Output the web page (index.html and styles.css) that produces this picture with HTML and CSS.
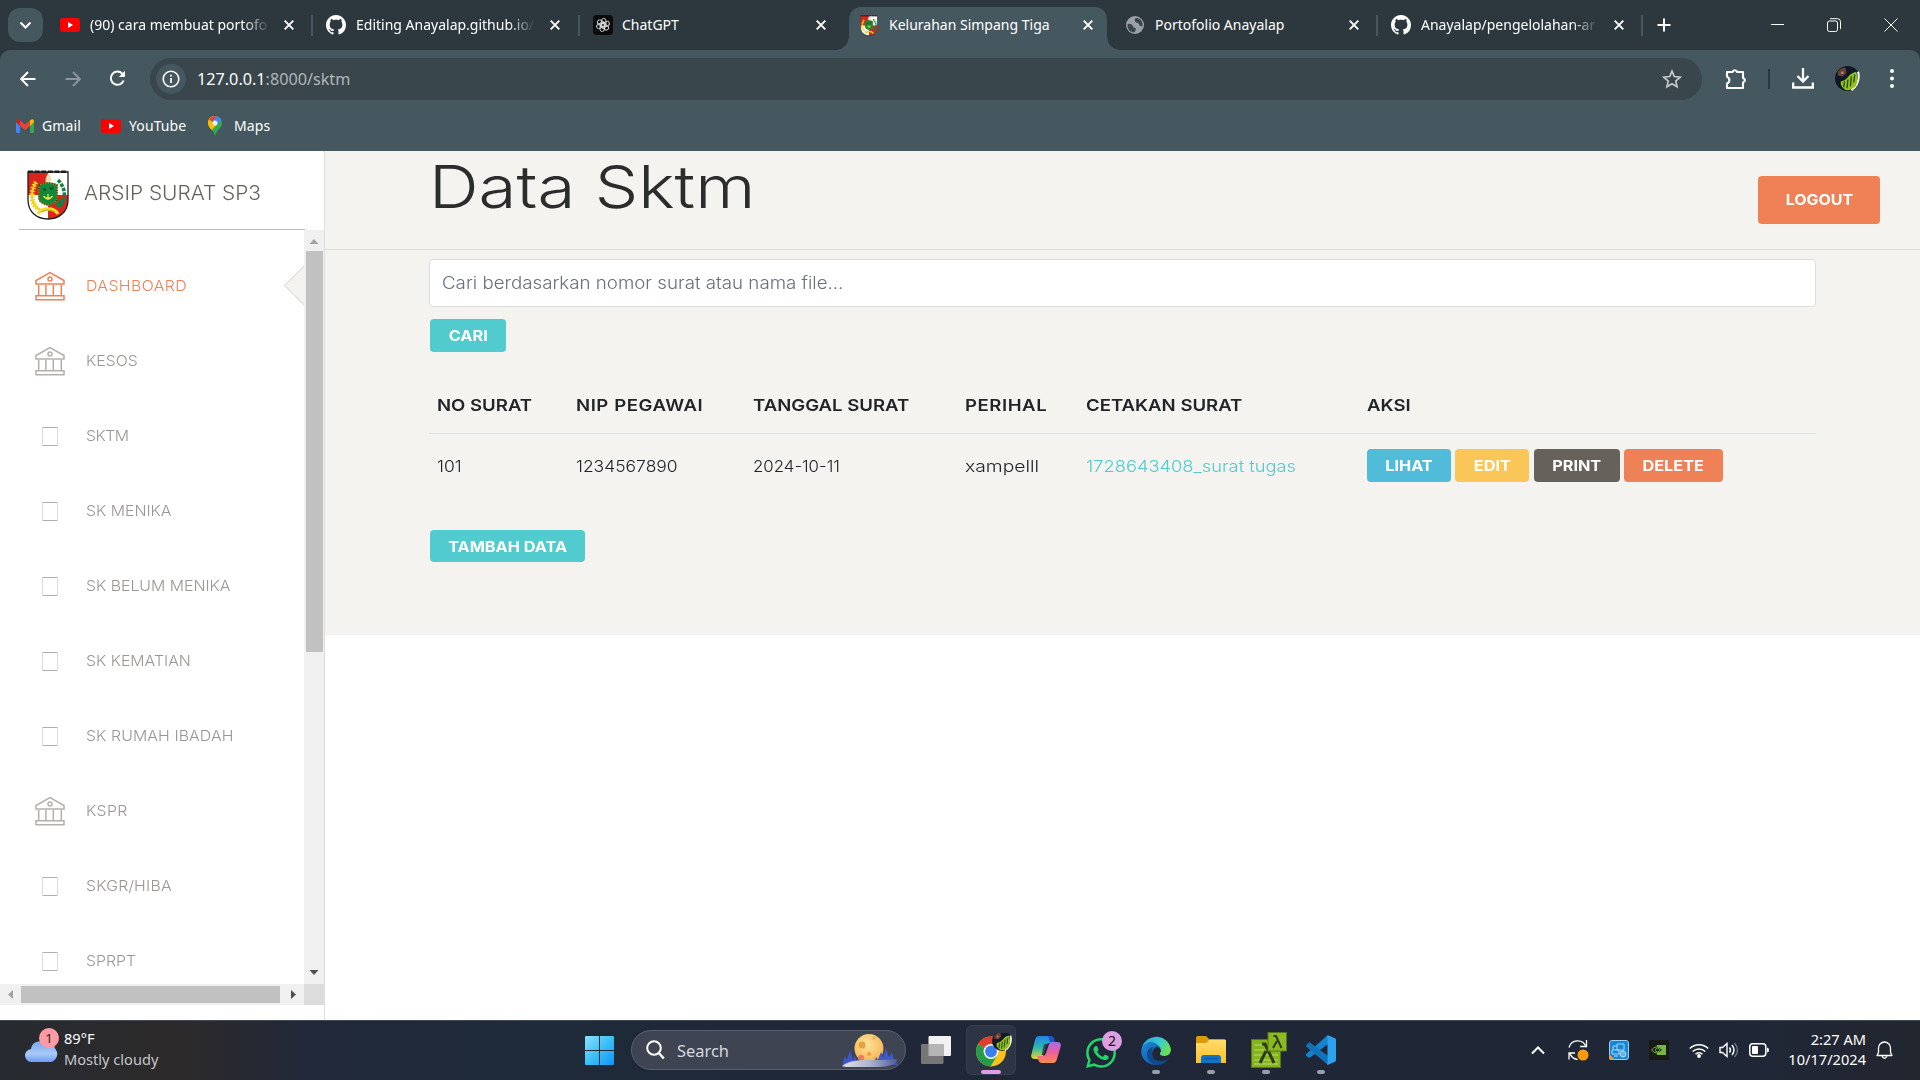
FILE: index.html
```html
<!DOCTYPE html>
<html lang="id">
<head>
<meta charset="utf-8">
<title>Kelurahan Simpang Tiga</title>
<link rel="stylesheet" href="styles.css">
</head>
<body>
<svg class="defs" width="0" height="0" aria-hidden="true">
  <defs>
    <linearGradient id="win" x1="0" y1="0" x2="1" y2="1"><stop offset="0" stop-color="#8be0fb"/><stop offset=".5" stop-color="#3cc0f8"/><stop offset="1" stop-color="#0f93f5"/></linearGradient>
    <linearGradient id="cloud" x1="0" y1="0" x2="0" y2="1"><stop offset="0" stop-color="#7ba8f0"/><stop offset=".6" stop-color="#a9c9f8"/><stop offset="1" stop-color="#6d9cf0"/></linearGradient>
    <radialGradient id="moon" cx=".45" cy=".35" r=".7"><stop offset="0" stop-color="#ffe39a"/><stop offset=".7" stop-color="#f7c064"/><stop offset="1" stop-color="#ea9a55"/></radialGradient>
    <linearGradient id="snow" x1="0" x2="1"><stop offset="0" stop-color="#dfe0e6"/><stop offset=".5" stop-color="#aeb3cc"/><stop offset="1" stop-color="#4b589c"/></linearGradient>
    <linearGradient id="copA" x1="0" y1="0" x2="0" y2="1"><stop offset="0" stop-color="#1f86e8"/><stop offset=".5" stop-color="#2fb7b0"/><stop offset="1" stop-color="#e8d52c"/></linearGradient>
    <linearGradient id="copB" x1="0" y1="0" x2="0" y2="1"><stop offset="0" stop-color="#a56bf0"/><stop offset=".5" stop-color="#ee5f9d"/><stop offset="1" stop-color="#fb8a4a"/></linearGradient>
    <linearGradient id="edgeA" x1="0" y1="0" x2="1" y2=".4"><stop offset="0" stop-color="#2a9fe0"/><stop offset=".6" stop-color="#35c9d2"/><stop offset="1" stop-color="#66e05a"/></linearGradient>
    <linearGradient id="edgeB" x1="0" y1="0" x2="1" y2="1"><stop offset="0" stop-color="#1b8ad8"/><stop offset="1" stop-color="#0d4f9e"/></linearGradient>
    <linearGradient id="folder" x1="0" y1="0" x2="0" y2="1"><stop offset="0" stop-color="#ffdc6a"/><stop offset="1" stop-color="#fdc02c"/></linearGradient>
    <symbol id="crest" viewBox="0 0 42 50">
      <path d="M1 2h40v28c0 12-9 19-20 19S1 42 1 30z" fill="#fff"/>
      <path d="M1 2h20v23H1z" fill="#dc241c"/>
      <path d="M21 25h20v5c0 12-9 19-20 19z" fill="#dc241c"/>
      <path d="M9 12C4 20 3 32 10 38q4 3 8 3" fill="none" stroke="#efd321" stroke-width="2.200"/>
      <path d="M9 12C4 20 3 32 10 38" fill="none" stroke="#efd321" stroke-width="5" stroke-dasharray="1.500 1.500"/>
      <path d="M31 10c6 6 8 14 5 22" fill="none" stroke="#128043" stroke-width="3.600" stroke-dasharray="3.500 1.200"/>
      <path d="M29 34l3-4h4l1 4-3 3h-4z" fill="#128043"/>
      <path d="M21 4c3 3 3 7 0 9s-3-5 0-9" fill="#e9e4c4" stroke="#cfc060" stroke-width=".7"/>
      <path d="M12 15q9-4 18 0v13q0 5-9 7-9-2-9-7z" fill="#0f8a3c" stroke="#8d8c1f" stroke-width="1.400"/>
      <path d="M12 15q9-4 18 0v13q0 5-9 7-9-2-9-7z" fill="none" stroke="#123f1c" stroke-width="1.400" stroke-dasharray="1 1.600"/>
      <path d="M21 24v6M16.500 26q4.500 6 9 0M18 28h6" fill="none" stroke="#f0e23c" stroke-width="1.300"/>
      <circle cx="17.500" cy="19.500" r="1.600" fill="#07552a"/><circle cx="24.500" cy="18.500" r="1.800" fill="#07552a"/>
      <path d="M11 44q3-5 10-5t10 5" fill="none" stroke="#f2de28" stroke-width="3.400"/>
      <path d="M14 42q7-4 14 0" fill="none" stroke="#b59a12" stroke-width=".8"/>
      <path d="M1 2h40v28c0 12-9 19-20 19S1 42 1 30z" fill="none" stroke="#1c1c1c" stroke-width="1.300"/>
      <path d="M1 1.800h40" stroke="#1c1c1c" stroke-width="2.600" stroke-dasharray="5 1.600"/>
    </symbol>
    <symbol id="bank" viewBox="0 0 30 30">
      <g fill="none" stroke="currentColor" stroke-width="1.500"><path d="M1 13V9.500L15 1.500l14 8V13z"/><circle cx="15" cy="8" r="2"/><path d="M3.700 14v10M10.900 14v10M18.300 14v10M26.300 14v10M1 24.800h28v4H1z"/></g>
    </symbol>
    <symbol id="glyph" viewBox="0 0 16 20"><path d="M.5 .5h15M.5 18.500h15" stroke="#b3afac" fill="none"/><path d="M.5 1v18M15.500 1v18" stroke="#dcdad8" fill="none"/></symbol>
    <symbol id="x" viewBox="0 0 12 12"><path d="M1.700 1.700l8.600 8.600M10.300 1.700l-8.600 8.600" stroke="#fff" stroke-width="1.900"/></symbol>
    <symbol id="yt" viewBox="0 0 20 14"><rect width="20" height="14" rx="3.200" fill="#f00"/><path d="M8 4l5 3-5 3z" fill="#fff"/></symbol>
    <symbol id="gh" viewBox="0 0 16 16"><path fill="#fff" d="M8 0C3.580 0 0 3.580 0 8c0 3.540 2.290 6.530 5.470 7.590.4.070.55-.17.55-.38 0-.19-.01-.82-.01-1.490-2.010.37-2.530-.49-2.690-.94-.09-.23-.48-.94-.82-1.130-.28-.15-.68-.52-.01-.53.63-.01 1.080.58 1.230.82.72 1.210 1.870.87 2.330.66.07-.52.28-.87.51-1.070-1.780-.2-3.640-.89-3.640-3.950 0-.87.31-1.590.82-2.150-.08-.2-.36-1.020.08-2.120 0 0 .67-.21 2.200.82.64-.18 1.320-.27 2-.27s1.360.09 2 .27c1.530-1.040 2.200-.82 2.200-.82.44 1.100.16 1.920.08 2.120.51.56.82 1.270.82 2.150 0 3.070-1.870 3.750-3.650 3.950.29.25.54.73.54 1.480 0 1.070-.01 1.930-.01 2.200 0 .21.15.46.55.38A8.010 8.010 0 0 0 16 8c0-4.420-3.580-8-8-8z"/></symbol>
    <symbol id="avatar" viewBox="0 0 26 26">
      <circle cx="13" cy="13" r="13" fill="#0e1826"/><path d="M3 6q4-5 8-4l1 5-4 4-5-1z" fill="#6b3f36"/><circle cx="7.500" cy="7" r="1.300" fill="#b98a80"/>
      <path d="M24 6q3 12-7 19" stroke="#fff" stroke-width="2.200" fill="none"/>
      <path d="M6 16q5-1 8-5t8-5q3 8 0 14-5 6-11 5-6-4-5-9z" fill="#8fc21c"/><path d="M10 16l-1 6M13.500 14l-1 9M17 11l-1 10M20.500 9l-1 8" stroke="#263f12" stroke-width="1.300"/>
    </symbol>
  </defs>
</svg>

<header class="browser">
  <div class="tabs">
    <div class="tab-search"><svg width="13" height="9" viewBox="0 0 13 9"><path d="M1.500 1.500l5 5 5-5" fill="none" stroke="#fff" stroke-width="2"/></svg></div>
    <div class="tab t1"><svg width="20" height="14"><use href="#yt"/></svg><span class="tab-title fade"><b>(90) cara membuat portofo</b></span><svg width="12" height="12"><use href="#x"/></svg></div>
    <div class="tab t2"><svg width="20" height="20"><use href="#gh"/></svg><span class="tab-title fade"><b>Editing Anayalap.github.io/</b></span><svg width="12" height="12"><use href="#x"/></svg></div>
    <div class="tab t3"><svg width="20" height="20" viewBox="0 0 20 20"><rect width="20" height="20" rx="4" fill="#0b0b0b"/><g fill="none" stroke="#dcdcdc" stroke-width=".9"><rect id="o" x="8.500" y="3.500" width="4.500" height="8.500" rx="2.200"/><use href="#o" transform="rotate(60 10 10)"/><use href="#o" transform="rotate(120 10 10)"/><use href="#o" transform="rotate(180 10 10)"/><use href="#o" transform="rotate(240 10 10)"/><use href="#o" transform="rotate(300 10 10)"/></g></svg><span class="tab-title"><b>ChatGPT</b></span><svg width="12" height="12"><use href="#x"/></svg></div>
    <div class="tab active"><svg width="20" height="21"><use href="#crest"/></svg><span class="tab-title"><b>Kelurahan Simpang Tiga</b></span><svg width="12" height="12"><use href="#x"/></svg></div>
    <div class="tab t5"><svg width="18" height="18" viewBox="0 0 18 18"><circle cx="9" cy="9" r="9" fill="#9aa0a6"/><path d="M1.500 8q4-1 5 1.500t3 2.500q1 3-2 4.500Q1 15 1.500 8zM9 2.500Q8 6 10.500 6.500t3 2.500 3 1Q17 3 11 2z" fill="#3a464d"/></svg><span class="tab-title"><b>Portofolio Anayalap</b></span><svg width="12" height="12"><use href="#x"/></svg></div>
    <div class="tab t6"><svg width="20" height="20"><use href="#gh"/></svg><span class="tab-title fade"><b>Anayalap/pengelolahan-ar</b></span><svg width="12" height="12"><use href="#x"/></svg></div>
    <svg class="new-tab" width="14" height="14" viewBox="0 0 14 14"><path d="M7 .5v13M.5 7h13" stroke="#fff" stroke-width="2"/></svg>
    <div class="window-controls">
      <svg width="13" height="14" viewBox="0 0 13 14"><path d="M0 6.500h13" stroke="#fff"/></svg>
      <svg width="14" height="14" viewBox="0 0 14 14"><g fill="none" stroke="#fff"><rect x=".5" y="3" width="10" height="10.500" rx="2"/><path d="M3 .7h7.500a3 3 0 0 1 3 3v7.500"/></g></svg>
      <svg width="14" height="14" viewBox="0 0 14 14"><path d="M.5 .5l13 13M13.500 .5l-13 13" stroke="#fff"/></svg>
    </div>
  </div>
  <div class="toolbar">
    <nav class="nav-buttons">
      <svg width="16" height="16" viewBox="0 0 16 16"><path d="M15.500 8H1.500M8 1L1.200 8 8 15" fill="none" stroke="#fff" stroke-width="1.900"/></svg>
      <svg width="16" height="16" viewBox="0 0 16 16"><path d="M.5 8h14M8 1l6.800 7L8 15" fill="none" stroke="#8b979c" stroke-width="1.900"/></svg>
      <svg width="17" height="17" viewBox="0 0 17 17"><path d="M14.600 10.500A6.600 6.600 0 1 1 13.300 3.700L15 5.500" fill="none" stroke="#fff" stroke-width="2"/><path d="M16 .8v6.200H9.800z" fill="#fff"/></svg>
    </nav>
    <div class="omnibox">
      <span class="site-info"><svg width="18" height="18" viewBox="0 0 18 18"><circle cx="9" cy="9" r="7.800" fill="none" stroke="#fff" stroke-width="1.600"/><path d="M9 8v5M9 4.800v1.700" stroke="#fff" stroke-width="1.700"/></svg></span>
      <span class="url"><b>127.0.0.1<i>:8000/sktm</i></b></span>
      <svg width="20" height="20" viewBox="0 0 24 24"><path d="M12 2.500l2.800 6.600 7.100.6-5.400 4.700 1.600 7-6.100-3.700-6.100 3.700 1.600-7-5.400-4.700 7.100-.6z" fill="none" stroke="#c5cacc" stroke-width="2"/></svg>
    </div>
    <div class="tools">
      <svg width="22" height="22" viewBox="0 0 22 22"><path d="M2 4h5.500a2.300 2.300 0 0 1 4.500 0h6v6a2.300 2.300 0 0 1 0 4.500V20H2v-4.500a3.600 3.600 0 0 0 0-6.800z" fill="none" stroke="#fff" stroke-width="2.100" stroke-linejoin="round"/></svg>
      <i class="divider"></i>
      <svg width="22" height="21" viewBox="0 0 22 21"><path d="M11 0v13M5.500 8l5.500 5.500L16.500 8M1.200 14.500v5h19.600v-5" fill="none" stroke="#fff" stroke-width="2.300"/></svg>
      <svg width="25" height="25"><use href="#avatar"/></svg>
      <svg width="4" height="19" viewBox="0 0 4 19"><g fill="#fff"><circle cx="2" cy="2" r="2"/><circle cx="2" cy="9.500" r="2"/><circle cx="2" cy="17" r="2"/></g></svg>
    </div>
  </div>
  <div class="bookmarks">
    <span class="bm bm1"><svg width="18" height="14" viewBox="0 0 18 14"><path d="M0 3h4v11H1.300A1.300 1.300 0 0 1 0 12.700z" fill="#4285f4"/><path d="M14 3h4v9.700a1.300 1.300 0 0 1-1.300 1.300H14z" fill="#34a853"/><path d="M14 1.500Q18-1.500 18 3L14 7z" fill="#fbbc04"/><path d="M4 1.500Q0-1.500 0 3l4 4z" fill="#c5221f"/><path d="M4 1.500l5 4 5-4V7l-5 4-5-4z" fill="#ea4335"/></svg><b>Gmail</b></span>
    <span class="bm bm2"><svg width="20" height="14"><use href="#yt"/></svg><b>YouTube</b></span>
    <span class="bm bm3"><svg width="14" height="20" viewBox="0 0 14 20"><path d="M7 0a7 7 0 0 1 7 7c0 5-5 6-7 13C5.500 13 0 12 0 7a7 7 0 0 1 7-7z" fill="#34a853"/><path d="M0 7Q0 0 7 0l6 3.500L4 14Q0 11 0 7z" fill="#fbbc04"/><path d="M1 3.500L4.500 6 9 1 7 0Q3 0 1 3.500z" fill="#ea4335"/><path d="M7 0q5 0 6.500 4L8 9 4.500 5.500 8.500 .2z" fill="#4285f4"/><circle cx="7" cy="7" r="2.500" fill="#e8f0fe"/></svg><b>Maps</b></span>
  </div>
</header>

<div class="page">
  <aside class="sidebar">
    <div class="brand"><svg width="42" height="50"><use href="#crest"/></svg><b>ARSIP SURAT SP3</b></div>
    <div class="scroller">
      <ul class="menu">
        <li class="current"><svg width="30" height="30"><use href="#bank"/></svg><b>DASHBOARD</b></li>
        <li><svg width="30" height="30"><use href="#bank"/></svg><b>KESOS</b></li>
        <li><svg class="small" width="16" height="20"><use href="#glyph"/></svg><b>SKTM</b></li>
        <li><svg class="small" width="16" height="20"><use href="#glyph"/></svg><b>SK MENIKA</b></li>
        <li><svg class="small" width="16" height="20"><use href="#glyph"/></svg><b>SK BELUM MENIKA</b></li>
        <li><svg class="small" width="16" height="20"><use href="#glyph"/></svg><b>SK KEMATIAN</b></li>
        <li><svg class="small" width="16" height="20"><use href="#glyph"/></svg><b>SK RUMAH IBADAH</b></li>
        <li><svg width="30" height="30"><use href="#bank"/></svg><b>KSPR</b></li>
        <li><svg class="small" width="16" height="20"><use href="#glyph"/></svg><b>SKGR/HIBA</b></li>
        <li><svg class="small" width="16" height="20"><use href="#glyph"/></svg><b>SPRPT</b></li>
      </ul>
      <div class="vbar">
        <svg width="20" height="21" viewBox="0 0 20 21"><path d="M5.500 14h9L10 9z" fill="#a3a3a3"/></svg>
        <i class="vthumb"></i>
        <svg width="20" height="21" viewBox="0 0 20 21"><path d="M5.500 7h9L10 12z" fill="#505050"/></svg>
      </div>
      <div class="hbar">
        <svg width="21" height="21" viewBox="0 0 21 21"><path d="M13 6v9l-5-4.500z" fill="#a3a3a3"/></svg>
        <i class="hthumb"></i>
        <svg width="24" height="21" viewBox="0 0 24 21"><path d="M11 6v9l5-4.500z" fill="#505050"/></svg>
      </div>
      <i class="corner"></i>
    </div>
  </aside>

  <main class="main">
    <div class="titlebar">
      <h1><b>Data Sktm</b></h1>
      <a class="btn logout"><b>LOGOUT</b></a>
    </div>
    <section class="content">
      <div class="search"><b>Cari berdasarkan nomor surat atau nama file...</b></div>
      <a class="btn teal cari"><b>CARI</b></a>
      <table>
        <colgroup><col class="c1"><col class="c2"><col class="c3"><col class="c4"><col class="c5"><col></colgroup>
        <thead><tr><th><b>NO SURAT</b></th><th><b class="loose">NIP PEGAWAI</b></th><th><b>TANGGAL SURAT</b></th><th><b class="loose">PERIHAL</b></th><th><b>CETAKAN SURAT</b></th><th><b>AKSI</b></th></tr></thead>
        <tbody><tr><td><b>101</b></td><td><b>1234567890</b></td><td><b class="date">2024-10-11</b></td><td><b class="subject">xampelll</b></td><td class="link"><b class="file">1728643408_surat tugas</b></td>
          <td class="last"><div class="actions"><a class="btn blue lihat"><b>LIHAT</b></a><a class="btn yellow edit"><b>EDIT</b></a><a class="btn dark print"><b>PRINT</b></a><a class="btn orange delete"><b>DELETE</b></a></div></td></tr></tbody>
      </table>
      <a class="btn teal tambah"><b>TAMBAH DATA</b></a>
    </section>
  </main>
</div>

<footer class="taskbar">
  <div class="weather">
    <svg width="36" height="40" viewBox="0 0 36 40"><circle cx="22" cy="18" r="8" fill="#f58220"/><path d="M7 34a6.500 6.500 0 0 1-1-13 8.500 8.500 0 0 1 16-3 7 7 0 0 1 4 16z" fill="url(#cloud)"/><circle cx="24" cy="10" r="10" fill="#ff99a4"/><text x="24" y="15" text-anchor="middle" font-size="13" fill="#222">1</text></svg>
    <div><b>89°F</b><br><b class="dim">Mostly cloudy</b></div>
  </div>
  <div class="dock">
    <svg width="29" height="29" viewBox="0 0 29 29"><path d="M0 1a1 1 0 0 1 1-1h13v14H0zM15 0h13a1 1 0 0 1 1 1v13H15zM0 15h14v14H1a1 1 0 0 1-1-1zM15 15h14v13a1 1 0 0 1-1 1H15z" fill="url(#win)"/></svg>
    <div class="find">
      <svg width="19" height="20" viewBox="0 0 19 20"><circle cx="8" cy="8" r="6.800" fill="none" stroke="#fff" stroke-width="2"/><path d="M12.800 13l5 5.500" stroke="#fff" stroke-width="2.400"/></svg>
      <b>Search</b>
      <svg width="56" height="36" viewBox="0 0 56 36"><circle cx="27" cy="16.500" r="14.500" fill="url(#moon)"/><circle cx="20" cy="13" r="3.500" fill="#e5a23c"/><circle cx="27" cy="22" r="2" fill="#ee9c4e"/><circle cx="32" cy="6" r="1.800" fill="#edb255"/><circle cx="19" cy="26" r="3" fill="#e97a5a"/><path d="M0 33l3-9 2 4 3-10 3 10 2-4 3 8zM32 32l2-7 2 3 3-8 2 5 3-9 3 9 3-5 2 8 4 5z" fill="#3d56c8"/><path d="M0 34q8-7 27-6 20 0 29-1-4 8-18 8H8q-6 0-8-1z" fill="url(#snow)"/></svg>
    </div>
    <svg class="views" width="30" height="28" viewBox="0 0 30 28"><rect x="7.500" width="22.500" height="20" rx="1" fill="#f2f2f2"/><rect y="8" width="22.500" height="20" rx="1" fill="#777"/><path d="M7.500 8h15v12h-15z" fill="#b4b4b4"/></svg>
    <div class="app on">
      <svg width="42" height="34" viewBox="0 0 42 34"><circle cx="16" cy="18.500" r="15" fill="#fbc116"/><path d="M16 18.500L3 11A15 15 0 0 1 29 11z" fill="#e33b2e"/><path d="M16 18.500L3 11a15 15 0 0 0 12.500 22.500L22.500 22z" fill="#269b4a"/><path d="M16 11.500h13" stroke="#e33b2e"/><circle cx="16" cy="18.500" r="7.500" fill="#fff"/><circle cx="16" cy="18.500" r="5.900" fill="#3b7ded"/><use href="#avatar" x="17" y="-2" width="20" height="20"/></svg>
      <i class="wide"></i>
    </div>
    <div class="app"><svg width="30" height="28" viewBox="0 0 30 28"><path d="M8 0h11q3 0 4 4l1 3h-6q-2 0-3 3l-3 10q-1 3-4 3H4q-5 0-3.500-5L4 4Q5 0 8 0z" fill="url(#copA)"/><path d="M22 27H11q-3 0-4-4l-.5-3H12q2 0 3-3l3-9q1-2 4-2h4q5 0 3.500 5L26 23q-1 4-4 4z" fill="url(#copB)"/><path d="M13 8h4.500l-3.500 11h-3.500z" fill="#232c3c" opacity=".75"/><path d="M17 0h3q3 0 4 6h-5z" fill="#1c56c9"/></svg></div>
    <div class="app"><svg width="36" height="38" viewBox="0 0 36 38"><g transform="translate(0 7) scale(1.880)"><path fill="#25d366" d="M13.601 2.326A7.854 7.854 0 0 0 7.994 0C3.627 0 .068 3.558.064 7.926c0 1.399.366 2.760 1.057 3.965L0 16l4.204-1.102a7.933 7.933 0 0 0 3.790.965h.004c4.368 0 7.926-3.558 7.930-7.930A7.898 7.898 0 0 0 13.600 2.326zM7.994 14.521a6.573 6.573 0 0 1-3.356-.92l-.24-.144-2.494.654.666-2.433-.156-.251a6.560 6.560 0 0 1-1.007-3.505c0-3.626 2.957-6.584 6.591-6.584a6.560 6.560 0 0 1 4.660 1.931 6.557 6.557 0 0 1 1.928 4.660c-.004 3.639-2.961 6.592-6.592 6.592zm3.615-4.934c-.197-.099-1.170-.578-1.353-.646-.182-.065-.315-.099-.445.099-.133.197-.513.646-.627.775-.114.133-.232.148-.43.050-.197-.1-.836-.308-1.592-.985-.59-.525-.985-1.175-1.103-1.372-.114-.198-.011-.304.088-.403.087-.088.197-.232.296-.346.1-.114.133-.198.198-.33.065-.134.034-.248-.015-.347-.05-.099-.445-1.076-.612-1.470-.16-.389-.323-.335-.445-.34-.114-.007-.247-.007-.38-.007a.729.729 0 0 0-.529.247c-.182.198-.691.677-.691 1.654 0 .977.710 1.916.81 2.049.098.133 1.394 2.132 3.383 2.992.47.205.84.326 1.129.418.475.152.904.129 1.246.080.38-.058 1.171-.48 1.338-.943.164-.464.164-.86.114-.943-.049-.084-.182-.133-.38-.232z"/></g><circle cx="26" cy="10" r="10" fill="#dd9fe3"/><text x="26" y="15" text-anchor="middle" font-size="14" fill="#111">2</text></svg></div>
    <div class="app"><svg width="30" height="30" viewBox="0 0 30 30"><path d="M1 12A15 15 0 0 1 30 14q0 6-6 7-6 0-5-3 2-2 0-5-8-7-18-1z" fill="url(#edgeA)"/><path d="M19 12Q10 2 1 12q-3 10 6 16 8 4 15 0-10 0-11-8 0-6 4-8 3-1 5 2z" fill="url(#edgeB)"/><path d="M11 16q-1 10 9 10 5 0 8-3-4 7-12 7Q6 28 6 18q1-6 7-6-2 1-2 4z" fill="#114a8b"/></svg><i></i></div>
    <div class="app"><svg width="30" height="28" viewBox="0 0 30 28"><path d="M0 2a2 2 0 0 1 2-2h8l3 3h15a2 2 0 0 1 2 2v5H0z" fill="#dc9a08"/><path d="M0 7h10l3-3h17v23H0z" fill="url(#folder)"/><path d="M5 27v-5a3 3 0 0 1 3-3h14a3 3 0 0 1 3 3v5z" fill="#0f74c9"/><path d="M8.500 22.800h13" stroke="#074f93"/></svg><i></i></div>
    <div class="app"><svg width="36" height="36" viewBox="0 0 36 36"><rect x=".5" y="7.500" width="29" height="28" fill="#84b51b" stroke="#59741c"/><path d="M3 13h13M3 18h24M3 23h24M3 28h24M3 32h24" stroke="#b9d67c"/><path d="M11 12h3l9 19M15 19L9 31" fill="none" stroke="#2e3b12" stroke-width="3"/><rect x="17" y=".5" width="18.500" height="18.500" fill="#8aba20" stroke="#59741c"/><path d="M22.500 4h2.500l5.500 12M26 9l-4 7" fill="none" stroke="#2e3b12" stroke-width="2"/></svg><i></i></div>
    <div class="app"><svg width="30" height="30" viewBox="0 0 30 30"><path d="M22 0v9L4 22.500l-1.500.2L0 20.500v-1.500z" fill="#1583cf"/><path d="M0 10.500L2.500 7.500 4 7.600 22 21v9L0 11.500z" fill="#1072b8"/><path d="M21.500 0L29 3.300a1.500 1.500 0 0 1 1 1.400v20.600a1.500 1.500 0 0 1-1 1.400L21.500 30z" fill="#2ba3f0"/></svg><i></i></div>
  </div>
  <div class="tray">
    <svg width="14" height="10" viewBox="0 0 14 10"><path d="M1 8.500l6-6 6 6" fill="none" stroke="#fff" stroke-width="2"/></svg>
    <svg class="sync" width="21" height="21" viewBox="0 0 21 21"><path d="M1 7.500a9 9 0 0 1 17-1M18.500 0v6.500H12M2 13.500q1.500 5 7.500 6M1 19.500v-6.500h6" fill="none" stroke="#fff" stroke-width="1.300"/><circle cx="15" cy="15" r="5.500" fill="#ff9a0c"/></svg>
    <svg class="wide-gap" width="20" height="20" viewBox="0 0 20 20"><rect x=".5" y=".5" width="19" height="19" rx="2.500" fill="#1686d6" stroke="#9fd0f0"/><path d="M4 10V6h4M8 4h7v6H8zM3 10h7v4H3zM5 16h4" fill="none" stroke="#a9d8f5"/><circle cx="14" cy="14" r="3" fill="#62b5ea" stroke="#b9dff7"/><path d="M0 14v4q0 2 2 2h4z" fill="#e8a040"/></svg>
    <svg class="wide-gap" width="20" height="20" viewBox="0 0 20 20"><path fill="#181a18" d="M0 0h20v20H0z"/><path d="M8 5h9v10H8z" fill="#76b83f"/><path d="M2.500 10q5-6.500 11 0-6 6-11 0z" fill="#181a18" stroke="#76b83f"/><circle cx="8.500" cy="10" r="2" fill="none" stroke="#76b83f"/></svg>
    <svg class="wide-gap" width="20" height="15" viewBox="0 0 20 15"><g fill="none" stroke="#fff" stroke-width="1.500"><path d="M.8 5.500a13 13 0 0 1 18.400 0M3.700 8.500a9 9 0 0 1 12.600 0M6.500 11.300a5 5 0 0 1 7 0"/></g><circle cx="10" cy="13" r="1.900" fill="#fff"/></svg>
    <svg class="gap" width="20" height="16" viewBox="0 0 20 16"><g fill="none" stroke="#fff" stroke-width="1.400"><path d="M1 5.500h2.500L8 1.500v13l-4.500-4H1z"/><path d="M10.500 5.500q2 2.500 0 5M13 3q4 5 0 10"/><path d="M15.500 1q6 7 0 14" stroke="#6b7280"/></g></svg>
    <svg class="gap" width="20" height="14" viewBox="0 0 20 14"><rect x=".8" y=".8" width="16" height="12.400" rx="3" fill="none" stroke="#fff" stroke-width="1.500"/><rect x="3" y="3" width="6" height="8" rx="1" fill="#fff"/><path d="M18 4.500q2 0 2 2.500t-2 2.500z" fill="#fff"/></svg>
    <div class="clock"><b>2:27 AM</b><br><b>10/17/2024</b></div>
    <svg class="bell" width="17" height="19" viewBox="0 0 17 19"><path d="M1 14.500l1.500-3V7a6 6 0 0 1 12 0v4.500l1.500 3zM6 15q2.500 4.500 5 0" fill="none" stroke="#fff" stroke-width="1.300" stroke-linejoin="round"/></svg>
  </div>
</footer>
</body>
</html>
```
FILE: styles.css
```css
* { box-sizing: border-box; }
body { margin: 0; width: 1920px; height: 1080px; overflow: hidden; background: #fff; font-family: Inter, "Liberation Sans", sans-serif; }
b { font-weight: inherit; display: inline-block; white-space: nowrap; }
i { font-style: normal; }
svg { display: block; flex: none; }
.defs { position: absolute; }

/* browser window */
.browser { height: 151px; background: #45575f; color: #fff; font: 14px/20px "Noto Sans", sans-serif; }
.tabs { height: 50px; display: flex; align-items: center; background: #2d383e; box-shadow: 0 12px 0 #2d383e; }
.tab-search { width: 35px; height: 34px; margin: 0 5px 0 8px; border-radius: 12px; background: #45575f; display: flex; align-items: center; justify-content: center; }
.tab { height: 43px; margin-top: 7px; display: flex; align-items: center; position: relative; padding-bottom: 7px; }
.tab-title { flex: 1; min-width: 0; margin: 0 15px 0 10px; }
.fade { -webkit-mask-image: linear-gradient(90deg, #000 85%, transparent); mask-image: linear-gradient(90deg, #000 85%, transparent); }
.t1, .t2, .t5, .t6 { border-right: 2px solid transparent; border-image: linear-gradient(transparent 20%, #45575f 20%, #45575f 66%, transparent 66%) 1; }
.t1 { width: 265px; padding-left: 12px; padding-right: 16px; }
.t1 .tab-title { margin-right: 13px; }
.t2 { width: 267px; padding-left: 13px; padding-right: 17px; }
.t2 .tab-title { margin-right: 14px; }
.t3 { width: 269px; padding-left: 13px; padding-right: 22px; }
.t3 .tab-title { margin-left: 9px; }
.active { width: 258px; padding-left: 10px; padding-right: 13px; background: #45575f; border-radius: 12px 12px 0 0; }
.active::before, .active::after { content: ""; position: absolute; bottom: 0; width: 13px; height: 13px; }
.active::before { left: -13px; background: radial-gradient(circle at 0 0, transparent 12.5px, #45575f 13px); }
.active::after { right: -13px; background: radial-gradient(circle at 100% 0, transparent 12.5px, #45575f 13px); }
.t5 { width: 271px; padding-left: 19px; padding-right: 16px; }
.t5 .tab-title { margin-left: 11px; }
.t6 { width: 265px; padding-left: 13px; padding-right: 16px; }
.new-tab { margin-left: 13.5px; }
.window-controls { margin-left: auto; padding-right: 22px; display: flex; gap: 43px; }
.toolbar { height: 57px; display: flex; align-items: center; background: #45575f; border-radius: 10px 10px 0 0; position: relative; }
.nav-buttons { width: 150px; padding-left: 20px; display: flex; align-items: center; gap: 28.5px; }
.omnibox { width: 1552px; height: 42px; border-radius: 21px; background: #39464c; display: flex; align-items: center; padding: 0 20px 0 6px; }
.site-info { width: 30px; height: 30px; border-radius: 50%; background: #45575f; display: flex; align-items: center; justify-content: center; }
.url { flex: 1; padding: 1px 0 0 11px; font-size: 16.2px; }
.url i { color: #b0b6b9; }
.tools { flex: 1; display: flex; align-items: center; padding-left: 23px; }
.divider { width: 2px; height: 20px; background: #2d383e; margin: 0 22px 0 21px; }
.tools svg:nth-of-type(3) { margin: 0 30px 0 21px; }
.bookmarks { height: 44px; display: flex; align-items: center; padding: 0 0 7px 16px; }
.bm { display: flex; align-items: center; gap: 8px; letter-spacing: .1px; }
.bm1 { width: 85px; }
.bm2 { width: 107px; }
.bm3 { gap: 12px; }

/* sidebar */
.page { height: 869px; display: flex; }
.sidebar { width: 325px; height: 869px; border-right: 1px solid #ddd; background: #fff; }
.brand { height: 79px; margin: 0 19px; padding: 10px 0 0 8px; display: flex; align-items: center; gap: 15px; border-bottom: 1px solid #bcbcbc; color: #66615b; font-size: 19.5px; font-weight: 330; }
.brand b { padding-bottom: 5px; transform: scaleX(1.07); transform-origin: left; }
.scroller { display: grid; grid-template: 754px 21px / 304px 20px; }
.menu { margin: 0; padding: 18px 0 0; list-style: none; overflow: hidden; color: #9a9693; font-size: 14.8px; font-weight: 350; }
.menu li { height: 75px; padding-left: 35px; display: flex; align-items: center; position: relative; }
.menu b { transform: scaleX(1.07); transform-origin: left; }
.menu svg { margin-right: 21px; color: #b3afac; }
.menu .small { margin: 2px 28px 0 7px; }
.menu li:nth-child(1) b, .menu li:nth-child(8) b { letter-spacing: .4px; }
.menu li:nth-child(3) b { letter-spacing: -.5px; }
.menu li:nth-child(7) b { letter-spacing: .1px; }
.menu li:nth-child(9) b { letter-spacing: .2px; }
.menu .current, .menu .current svg { color: #ef8157; }
.current::after { content: ""; position: absolute; right: -15px; top: 23px; width: 27px; height: 27px; background: #f4f3ef; border: 1px solid #dedcd8; transform: rotate(45deg); }
.vbar { background: #f0f0f0; display: flex; flex-direction: column; }
.vthumb { width: 17px; height: 401px; margin-left: 2px; background: #c1c1c1; }
.vbar svg:last-child { margin-top: auto; }
.hbar { background: #f0f0f0; display: flex; align-items: center; }
.hthumb { width: 259px; height: 17px; background: #c1c1c1; }
.corner { background: #dcdcdc; }

/* main panel */
.main { flex: 1; height: 484px; background: #f4f3ef; }
.titlebar { height: 99px; border-bottom: 1px solid #ddd; padding: 0 40px 0 104px; display: flex; align-items: center; }
h1 { flex: 1; margin: 0 0 26px; font-size: 59px; line-height: 70px; font-weight: 320; color: #2c2c2c; }
h1 b { transform: scaleX(1.168); transform-origin: left; }
.btn { display: flex; align-items: center; justify-content: center; height: 33px; border-radius: 4px; color: #fff; font-size: 14.4px; font-weight: 700; }
.btn b { transform: scaleX(1.13); }
.logout { width: 122px; height: 48px; background: #f08156; margin-bottom: 1px; }
.logout b { transform: scaleX(1.11); }
.teal { background: #51cbce; }
.blue { background: #51bcda; }
.yellow { background: #fbc658; }
.dark { background: #66615b; }
.orange { background: #ef8157; }
.content { padding: 9px 104px 0; }
.search { height: 48px; border: 1px solid #ddd; border-radius: 4px; background: #fff; padding: 0 12px; display: flex; align-items: center; font-size: 16.8px; font-weight: 320; color: #66707a; }
.search b { transform: scaleX(1.115); transform-origin: left; }
.cari { width: 76px; margin: 12px 0 0 1px; }
.tambah { width: 155px; height: 32px; margin: 33px 0 0 1px; }
table { width: 1387px; margin-top: 24px; table-layout: fixed; border-collapse: collapse; color: #212529; }
th, td { padding: 2px 8px 0; text-align: left; font-size: 16.5px; }
th { height: 57px; font-weight: 620; border-bottom: 1px solid #dee2e6; }
th b { transform: scaleX(1.125); transform-origin: left; }
.loose { letter-spacing: .5px; }
td { height: 64px; font-weight: 330; }
td.last { padding-top: 0; }
td > b { transform: scaleX(1.06); transform-origin: left; }
td > .date { transform: scaleX(1.02); }
td > .subject { transform: scaleX(1.17); }
td > .file { transform: scaleX(1.11); }
.link { color: #51cbce; }
.c1 { width: 139px; }
.c2 { width: 177px; }
.c3 { width: 212px; }
.c4 { width: 121px; }
.c5 { width: 281px; }
.actions { display: flex; gap: 4.3px; }
.lihat { width: 84px; }
.edit { width: 74px; }
.print { width: 86px; }
.delete { width: 99px; }

/* taskbar */
.taskbar { height: 60px; border-top: 1px solid #414a54; display: flex; background: linear-gradient(90deg, #262b31 0, #2d2a2a 9%, #20283a 17%, #1e2a39 28%, #1f2738 45%, #1f2737 90%, #22262f 100%); color: #fff; font: 14.6px/20px "Noto Sans", sans-serif; }
.taskbar text { font-family: "Noto Sans", sans-serif; }
.weather { width: 585px; padding: 7px 0 0 25px; display: flex; gap: 3px; line-height: 20.5px; }
.dim { color: #c4c7cb; }
.dock { width: 946px; display: flex; align-items: center; padding-bottom: 1px; }
.find { width: 275px; height: 40px; margin: 0 15px 0 17px; padding: 0 7px 0 14px; border-radius: 20px; border: 1px solid #5a606b; background: #3e4452; display: flex; align-items: center; font-size: 16.4px; color: #d6d8dc; }
.find b { flex: 1; margin-left: 12px; padding-top: 1px; }
.views { margin-right: 15px; }
.app { width: 50px; height: 50px; margin-right: 5px; border-radius: 6px; position: relative; display: flex; align-items: center; padding-left: 10px; }
.on { background: #2d3545; border: 1px solid #363e4d; padding-left: 8px; }
.app i { position: absolute; left: 21px; bottom: 1px; width: 8px; height: 4px; border-radius: 2px; background: #9ba0a8; }
.app .wide { left: 14px; bottom: 0; width: 20px; background: #dd9fe3; }
.tray { flex: 1; display: flex; align-items: center; padding-bottom: 1px; }
.sync { margin-left: 22.5px; }
.wide-gap { margin-left: 20px; }
.gap { margin-left: 10px; }
.clock { width: 97.5px; text-align: right; padding-bottom: 3px; }
.bell { margin-left: 10px; }
```
